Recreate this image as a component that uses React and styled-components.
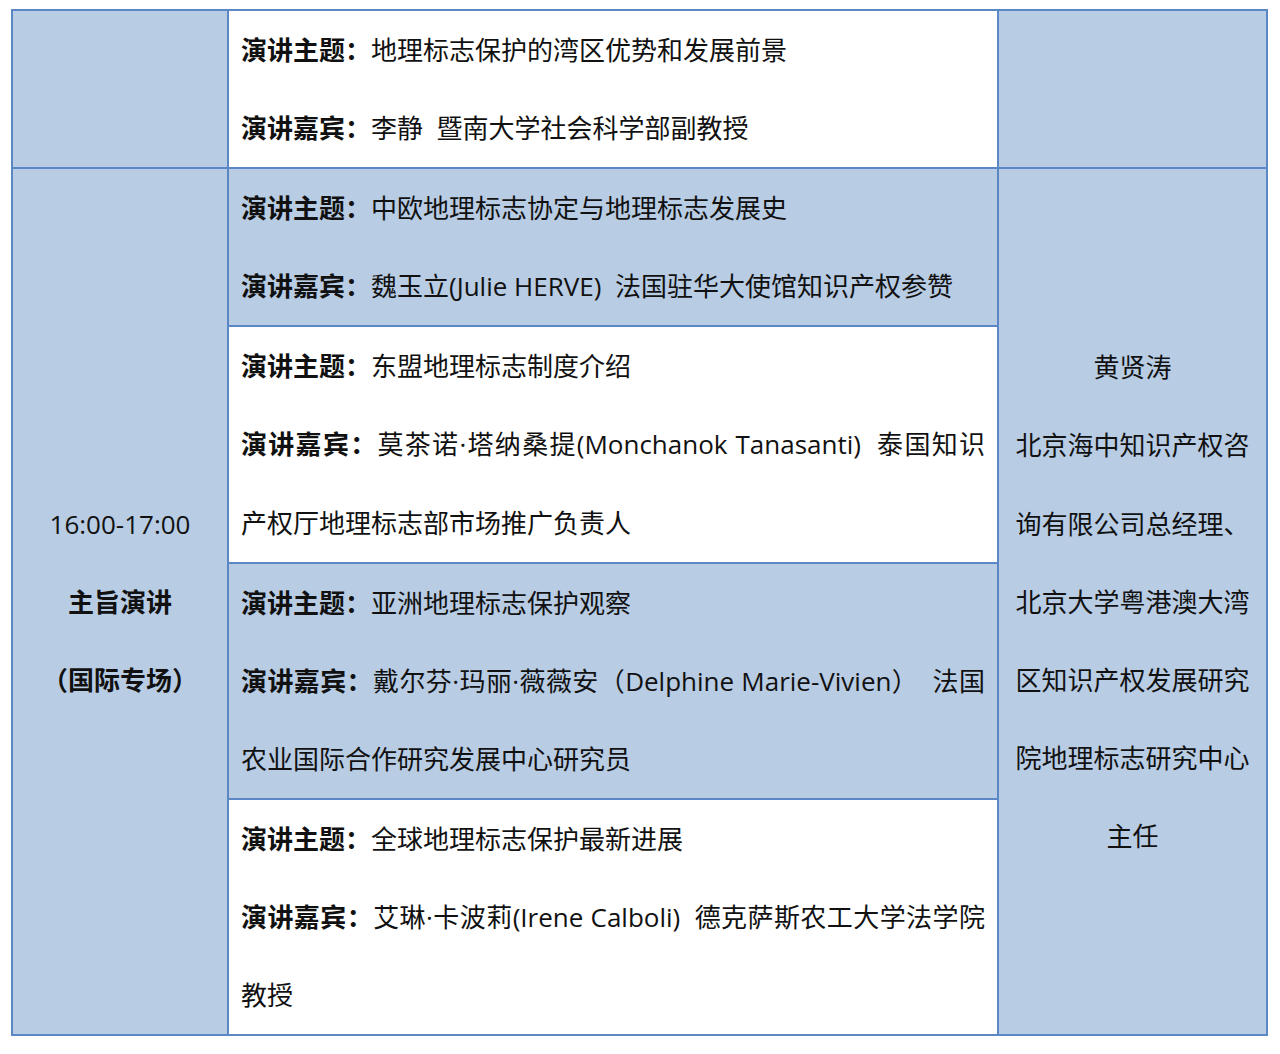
import React from 'react';
import styled, { createGlobalStyle } from 'styled-components';

const GlobalStyle = createGlobalStyle`
  html, body {
    margin: 0;
    padding: 0;
    background: #ffffff;
  }
  body {
    font-family: "Open Sans", "Noto Sans CJK SC", sans-serif;
    color: #111111;
  }
`;

const BORDER = '#5b87c5';
const FILL = '#b8cce4';

const Page = styled.div`
  padding: 9px 0 18px 11px;
`;

const Table = styled.div`
  width: 1257px;
  display: grid;
  grid-template-columns: 214px 768px 1fr;
  gap: 2px;
  padding: 2px;
  box-sizing: border-box;
  background: ${BORDER};
  font-size: 26px;
  line-height: 78.1px;
`;

const SideCell = styled.div`
  background: ${FILL};
  grid-column: ${(p) => p.$col};
  grid-row: ${(p) => p.$rows};
  display: flex;
  flex-direction: column;
  justify-content: center;
  align-items: center;
  text-align: center;
  padding: 0 12px;
`;

const Talk = styled.div`
  background: ${(p) => (p.$shaded ? FILL : '#ffffff')};
  padding: 0 12px 0 12px;
  grid-column: 2;
  grid-row: ${(p) => p.$row};
`;

const Line = styled.div`
  white-space: pre;
  text-align: left;
  text-align-last: ${(p) => (p.$fill ? 'justify' : 'auto')};
`;

const Label = styled.b`
  font-weight: 700;
`;

const Strong = styled.div`
  font-weight: 700;
`;

const Plain = styled.div``;

const talks = [
  {
    shaded: false,
    topic: '地理标志保护的湾区优势和发展前景',
    guest: ['李静  暨南大学社会科学部副教授'],
  },
  {
    shaded: true,
    topic: '中欧地理标志协定与地理标志发展史',
    guest: ['魏玉立(Julie HERVE)  法国驻华大使馆知识产权参赞'],
  },
  {
    shaded: false,
    topic: '东盟地理标志制度介绍',
    guest: ['莫茶诺·塔纳桑提(Monchanok Tanasanti)  泰国知识', '产权厅地理标志部市场推广负责人'],
  },
  {
    shaded: true,
    topic: '亚洲地理标志保护观察',
    guest: ['戴尔芬·玛丽·薇薇安（Delphine Marie-Vivien）  法国', '农业国际合作研究发展中心研究员'],
  },
  {
    shaded: false,
    topic: '全球地理标志保护最新进展',
    guest: ['艾琳·卡波莉(Irene Calboli)  德克萨斯农工大学法学院', '教授'],
  },
];

function TalkBlock({ talk, row }) {
  return (
    <Talk $shaded={talk.shaded} $row={row}>
      <Line>
        <Label>演讲主题：</Label>
        {talk.topic}
      </Line>
      {talk.guest.map((text, i) => (
        <Line key={i} $fill={i < talk.guest.length - 1}>
          {i === 0 && <Label>演讲嘉宾：</Label>}
          {text}
        </Line>
      ))}
    </Talk>
  );
}

export default function App() {
  return (
    <>
      <GlobalStyle />
      <Page>
        <Table>
          <SideCell $col="1" $rows="1" />
          <SideCell $col="3" $rows="1" />
          <SideCell $col="1" $rows="2 / span 4">
            <Plain>16:00-17:00</Plain>
            <Strong>主旨演讲</Strong>
            <Strong>（国际专场）</Strong>
          </SideCell>
          <SideCell $col="3" $rows="2 / span 4">
            <Plain>黄贤涛</Plain>
            <Plain>北京海中知识产权咨询有限公司总经理、北京大学粤港澳大湾区知识产权发展研究院地理标志研究中心主任</Plain>
          </SideCell>
          {talks.map((talk, i) => (
            <TalkBlock key={i} talk={talk} row={i + 1} />
          ))}
        </Table>
      </Page>
    </>
  );
}
